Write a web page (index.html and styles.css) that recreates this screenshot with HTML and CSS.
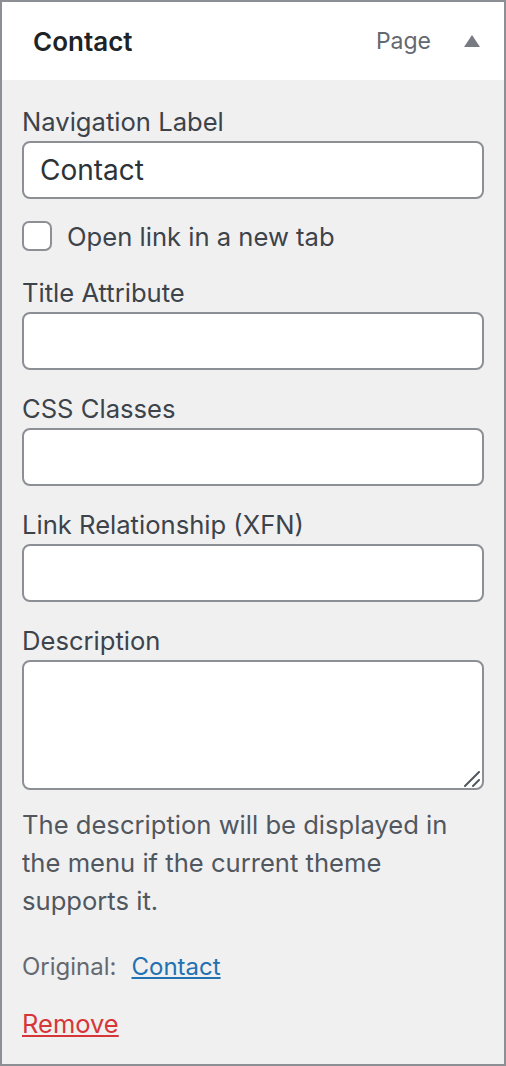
FILE: index.html
```html
<!DOCTYPE html>
<html lang="en">
<head>
<meta charset="utf-8">
<title>Menu item: Contact</title>
<link rel="stylesheet" href="styles.css">
</head>
<body>
<div class="menu-item">
  <div class="item-handle">
    <span class="item-title">Contact</span>
    <span class="item-controls">
      <span class="item-type">Page</span>
      <svg class="toggle" width="16" height="12" viewBox="0 0 16 12" aria-hidden="true"><polygon points="8,0 16,12 0,12" fill="#787c82"/></svg>
    </span>
  </div>
  <div class="item-settings">
    <div class="field">
      <label class="field-label" for="nav-label">Navigation Label</label>
      <input class="text-input" id="nav-label" type="text" value="Contact">
    </div>
    <label class="check-row">
      <span class="checkbox"></span>
      <span class="check-text">Open link in a new tab</span>
    </label>
    <div class="field">
      <label class="field-label" for="title-attr">Title Attribute</label>
      <input class="text-input" id="title-attr" type="text">
    </div>
    <div class="field">
      <label class="field-label" for="css-classes">CSS Classes</label>
      <input class="text-input" id="css-classes" type="text">
    </div>
    <div class="field">
      <label class="field-label" for="xfn">Link Relationship (XFN)</label>
      <input class="text-input" id="xfn" type="text">
    </div>
    <div class="field field-desc">
      <label class="field-label" for="desc">Description</label>
      <div class="area-wrap">
        <textarea class="text-area" id="desc"></textarea>
        <svg class="grip" width="16" height="16" viewBox="0 0 16 16" aria-hidden="true">
          <line x1="1" y1="15" x2="15" y2="1" stroke="#50575e" stroke-width="2" stroke-linecap="round"/>
          <line x1="9" y1="15" x2="15" y2="9" stroke="#50575e" stroke-width="2" stroke-linecap="round"/>
        </svg>
      </div>
    </div>
    <p class="description">The description will be displayed in the menu if the current theme supports it.</p>
    <p class="original">Original:<a href="#" class="link">Contact</a></p>
    <p class="actions"><a href="#" class="remove">Remove</a></p>
  </div>
</div>
</body>
</html>
```

FILE: styles.css
```css
* { box-sizing: border-box; }
html, body { margin: 0; padding: 0; }
body {
  font-family: "Inter", "Noto Sans", sans-serif;
  background: #f0f0f1;
  color: #3c434a;
}
.menu-item {
  width: 506px;
  height: 1066px;
  border: 2px solid #8c8f94;
  background: #f0f0f1;
  display: flex;
  flex-direction: column;
}
.item-handle {
  height: 78px;
  background: #fff;
  display: flex;
  align-items: center;
  justify-content: space-between;
  padding: 0 24px 0 31px;
}
.item-title {
  font-size: 26px;
  font-weight: 600;
  color: #1d2327;
}
.item-controls {
  display: flex;
  align-items: center;
  gap: 33px;
}
.item-type {
  font-size: 23px;
  color: #646970;
}
.toggle { display: block; }
.item-settings {
  padding: 25px 20px 20px 20px;
  display: flex;
  flex-direction: column;
}
.field {
  display: flex;
  flex-direction: column;
  margin-bottom: 22px;
}
.field-label {
  font-size: 25.6px;
  line-height: 34px;
  margin-bottom: 2px;
  color: #3c434a;
}
.text-input, .text-area {
  width: 462px;
  height: 58px;
  border: 2px solid #8c8f94;
  border-radius: 8px;
  background: #fff;
  padding: 0 16px;
  font-family: inherit;
  font-size: 28px;
  color: #2c3338;
  margin: 0;
  outline: none;
}
.area-wrap {
  position: relative;
  width: 462px;
  height: 130px;
}
.text-area {
  height: 130px;
  resize: none;
  display: block;
}
.grip {
  position: absolute;
  right: 4px;
  bottom: 3px;
}
.field-desc { margin-bottom: 16px; }
.check-row {
  display: flex;
  align-items: center;
  gap: 15px;
  height: 32px;
  margin-top: -1px;
  margin-bottom: 24px;
}
.checkbox {
  width: 30px;
  height: 30px;
  border: 2px solid #8c8f94;
  border-radius: 7px;
  background: #fff;
  flex: none;
}
.check-text {
  font-size: 25.6px;
  color: #3c434a;
}
.description {
  margin: 0;
  font-size: 25.6px;
  line-height: 38px;
  color: #50575e;
}
.original {
  margin: 28px 0 0;
  font-size: 24px;
  line-height: 38px;
  color: #646970;
  display: flex;
  gap: 15px;
}
.link { color: #2271b1; text-decoration: underline; }
.actions {
  margin: 19px 0 0;
  font-size: 25.5px;
  line-height: 38px;
}
.remove { color: #d63638; text-decoration: underline; }
```
